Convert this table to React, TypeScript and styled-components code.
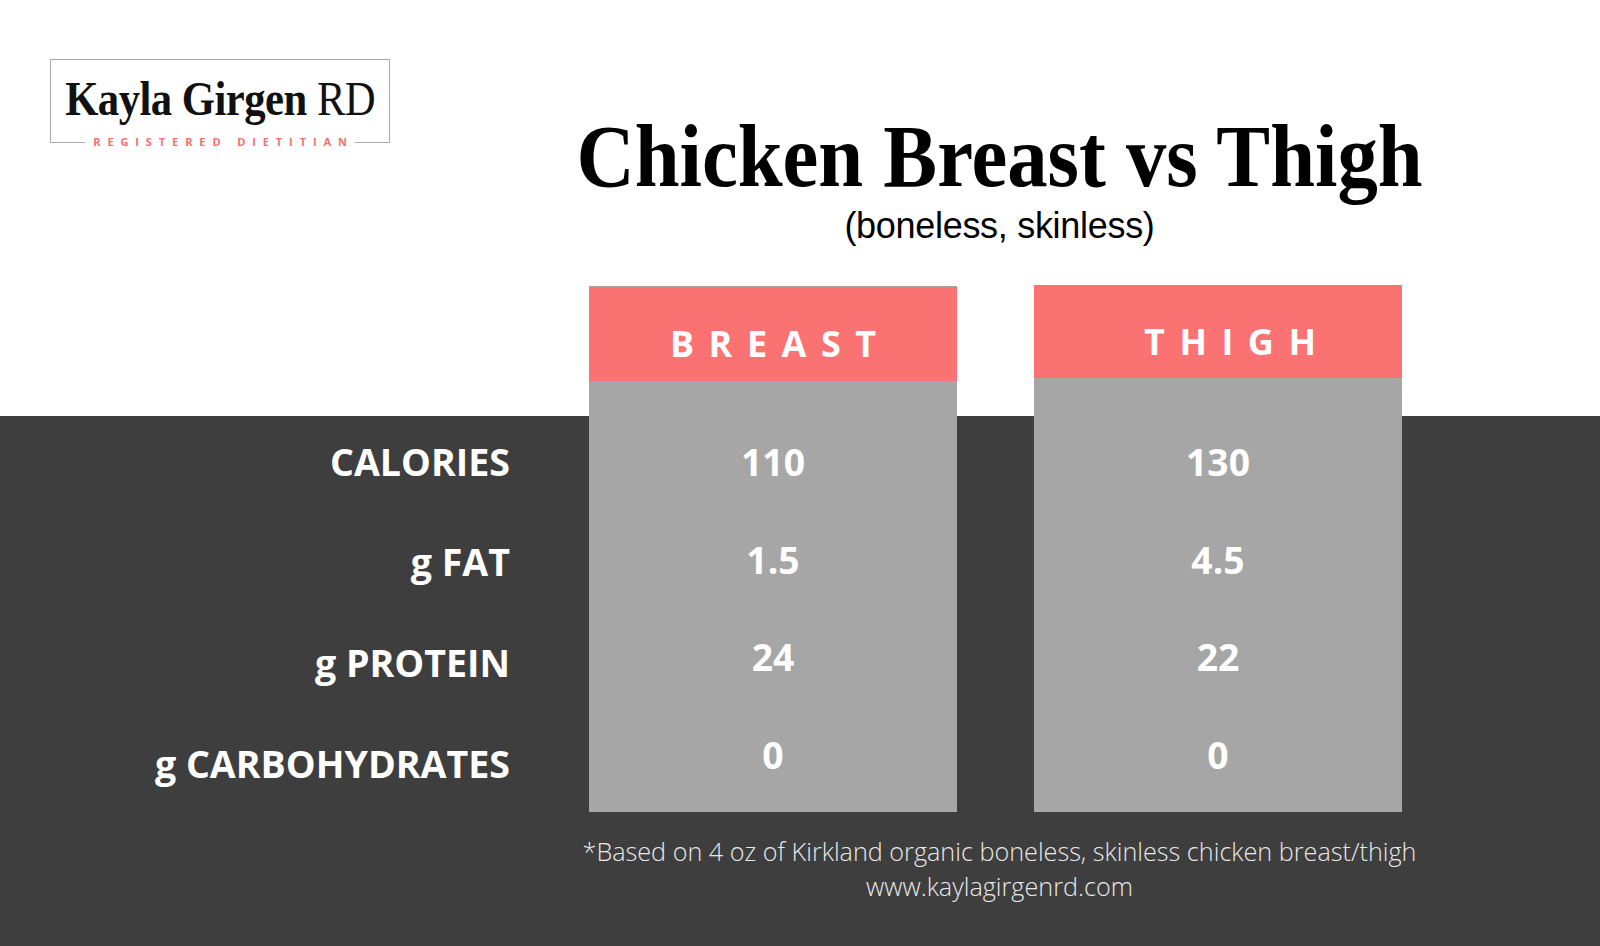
import React from "react";
import styled, { createGlobalStyle } from "styled-components";

const GlobalStyle = createGlobalStyle`
  html, body { margin: 0; padding: 0; background: #ffffff; }
  #root { width: 1600px; }
`;

const Page = styled.div`
  width: 1600px;
  height: 946px;
  overflow: hidden;
  box-sizing: border-box;
  padding-top: 59px;
  background: linear-gradient(to bottom, #ffffff 0, #ffffff 416px, #3e3e3e 416px, #3e3e3e 100%);
  font-family: "Open Sans", "Liberation Sans", sans-serif;
`;

const TopRow = styled.div`
  display: flex;
  align-items: flex-start;
`;

const Logo = styled.div`
  margin-left: 50px;
  width: 340px;
  display: flex;
  flex-direction: column;
`;

const LogoFrame = styled.div`
  box-sizing: border-box;
  height: 83px;
  border: 1px solid #ababab;
  border-bottom: none;
  padding-top: 15px;
  display: flex;
  justify-content: center;
`;

const LogoName = styled.span`
  display: inline-block;
  font-family: "Liberation Serif", "Times New Roman", serif;
  font-size: 48px;
  line-height: 48px;
  font-weight: 700;
  color: #111111;
  white-space: nowrap;
  letter-spacing: -0.6px;
  transform: scaleX(0.89);
  transform-origin: center;
`;

const LogoRD = styled.span`
  font-weight: 400;
`;

const LogoRule = styled.div`
  display: flex;
  align-items: center;
  height: 14px;
  margin-top: -7px;
`;

const RuleLine = styled.div`
  flex: 1;
  height: 1px;
  background: #ababab;
`;

const RuleText = styled.div`
  margin: 0 1px 0 8px;
  font-family: "Open Sans", "Liberation Sans", sans-serif;
  font-weight: 700;
  font-size: 11px;
  line-height: 14px;
  letter-spacing: 6.9px;
  color: #f76f6f;
  white-space: nowrap;
`;

const CenterBand = styled.div`
  margin-left: 159px;
  width: 901px;
  margin-top: 53px;
  display: flex;
  flex-direction: column;
  align-items: center;
`;

const Title = styled.h1`
  margin: 0;
  width: 901px;
  display: flex;
  justify-content: center;
  font-family: "Liberation Serif", "Times New Roman", serif;
  font-weight: 700;
  font-size: 89px;
  line-height: 89px;
  color: #000000;
  white-space: nowrap;
  transform: scaleX(0.906);
  transform-origin: center;
`;

const Subtitle = styled.div`
  margin-top: 6.5px;
  font-family: "Liberation Sans", Arial, sans-serif;
  font-size: 36px;
  line-height: 36px;
  letter-spacing: -0.3px;
  color: #000000;
`;

const Table = styled.div`
  display: flex;
  align-items: flex-start;
  margin-top: 42.5px;
  height: 526px;
`;

const LabelColumn = styled.div`
  box-sizing: border-box;
  margin-left: 50px;
  margin-right: 79px;
  width: 460px;
  padding-top: 125.75px;
  display: flex;
  flex-direction: column;
  align-items: flex-end;
`;

const Label = styled.div`
  height: 100.6px;
  line-height: 100.6px;
  font-family: "Open Sans", "Liberation Sans", sans-serif;
  font-weight: 700;
  font-size: 37.6px;
  color: #ffffff;
  white-space: nowrap;
`;

const Column = styled.div<{ $gap: number }>`
  width: 368px;
  height: 100%;
  margin-left: ${(p) => p.$gap}px;
  display: flex;
  flex-direction: column;
`;

const Head = styled.div<{ $edge: boolean; $height: number; $shift: number }>`
  box-sizing: border-box;
  height: ${(p) => p.$height}px;
  margin-top: ${(p) => (p.$edge ? 0 : -1)}px;
  border-top: ${(p) => (p.$edge ? "1px solid #a4a4a4" : "none")};
  background: #fb7273;
  padding-top: 39px;
  padding-left: ${(p) => p.$shift}px;
  text-align: center;
  font-family: "Open Sans", "Liberation Sans", sans-serif;
  font-weight: 700;
  font-size: 36px;
  line-height: 36px;
  letter-spacing: 14.5px;
  color: #ffffff;
  white-space: nowrap;
`;

const Body = styled.div<{ $pad: number }>`
  flex: 1;
  box-sizing: border-box;
  background: #a6a6a6;
  padding-top: ${(p) => p.$pad}px;
  display: flex;
  flex-direction: column;
  align-items: center;
`;

const Value = styled.div`
  height: 97.5px;
  line-height: 97.5px;
  font-family: "Open Sans", "Liberation Sans", sans-serif;
  font-weight: 700;
  font-size: 37.3px;
  color: #ffffff;
`;

const Footer = styled.div`
  margin-left: 549px;
  width: 901px;
  margin-top: 22px;
  text-align: center;
  font-family: "Open Sans", "Liberation Sans", sans-serif;
  font-weight: 300;
  font-size: 25.2px;
  line-height: 34.5px;
  color: #e8e8e8;
  white-space: nowrap;
`;

const labels = ["CALORIES", "g FAT", "g PROTEIN", "g CARBOHYDRATES"];

const columns = [
  { name: "BREAST", values: ["110", "1.5", "24", "0"], edge: true, height: 95, shift: 14.5, pad: 32.3, gap: 0 },
  { name: "THIGH", values: ["130", "4.5", "22", "0"], edge: false, height: 93, shift: 38.5, pad: 35.3, gap: 77 },
];

export default function App() {
  return (
    <>
      <GlobalStyle />
      <Page>
        <TopRow>
          <Logo>
            <LogoFrame>
              <LogoName>
                Kayla Girgen <LogoRD>RD</LogoRD>
              </LogoName>
            </LogoFrame>
            <LogoRule>
              <RuleLine />
              <RuleText>REGISTERED DIETITIAN</RuleText>
              <RuleLine />
            </LogoRule>
          </Logo>
          <CenterBand>
            <Title>Chicken Breast vs Thigh</Title>
            <Subtitle>(boneless, skinless)</Subtitle>
          </CenterBand>
        </TopRow>
        <Table>
          <LabelColumn>
            {labels.map((l) => (
              <Label key={l}>{l}</Label>
            ))}
          </LabelColumn>
          {columns.map((c) => (
            <Column key={c.name} $gap={c.gap}>
              <Head $edge={c.edge} $height={c.height} $shift={c.shift}>
                {c.name}
              </Head>
              <Body $pad={c.pad}>
                {c.values.map((v, i) => (
                  <Value key={i}>{v}</Value>
                ))}
              </Body>
            </Column>
          ))}
        </Table>
        <Footer>
          *Based on 4 oz of Kirkland organic boneless, skinless chicken breast/thigh
          <br />
          www.kaylagirgenrd.com
        </Footer>
      </Page>
    </>
  );
}
